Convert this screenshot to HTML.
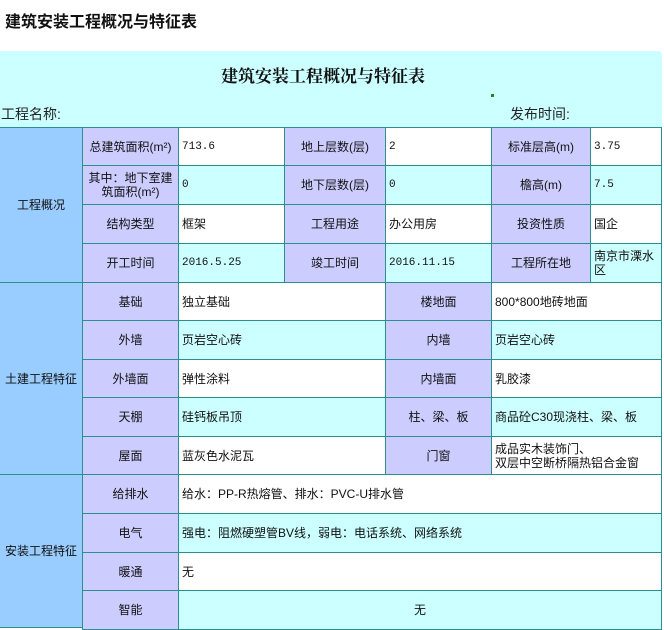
<!DOCTYPE html>
<html><head><meta charset="utf-8"><style>
body{margin:0;width:664px;height:628px;background:#fff;position:relative;overflow:hidden;font-family:"Liberation Sans","Noto Sans CJK SC",sans-serif;font-size:12px;color:#111}
.c{position:absolute;box-sizing:border-box;border:1px solid #2b8f8f;display:flex;align-items:center;justify-content:center;text-align:center;line-height:14px;margin:-1px 0 0 -1px}
.v{justify-content:flex-start;text-align:left;padding-left:3px}
.L{background:#ccccff}.B{background:#99ccff}.W{background:#fff}.C{background:#ccffff}
.m{font-family:"Liberation Mono","Noto Sans CJK SC",monospace;font-size:11px}
</style></head><body>
<div style="position:absolute;left:5px;top:8px;font-size:16px;font-weight:bold">建筑安装工程概况与特征表</div>
<div style="position:absolute;left:0;top:51px;width:662px;height:78px;background:#ccffff;border-top-right-radius:4px"></div>
<div style="position:absolute;left:0;top:62px;width:646px;text-align:center;font-size:17px;font-weight:bold;font-family:'Liberation Serif','Noto Serif CJK SC',serif">建筑安装工程概况与特征表</div>
<div style="position:absolute;left:491px;top:94px;width:3px;height:3px;background:#1a8a1a"></div>
<div style="position:absolute;left:1px;top:104px;font-size:14px;color:#222">工程名称:</div>
<div style="position:absolute;left:510px;top:104px;font-size:14px;color:#222">发布时间:</div>

<div class="c B" style="left:0;top:128px;width:84px;height:156px">工程概况</div>
<div class="c B" style="left:0;top:283px;width:84px;height:193px">土建工程特征</div>
<div class="c B" style="left:0;top:475px;width:84px;height:154px">安装工程特征</div>

<!-- row1 -->
<div class="c L" style="left:83px;top:128px;width:97px;height:39px">总建筑面积(m²)</div>
<div class="c W v m" style="left:179px;top:128px;width:107px;height:39px">713.6</div>
<div class="c L" style="left:285px;top:128px;width:102px;height:39px">地上层数(层)</div>
<div class="c W v m" style="left:386px;top:128px;width:107px;height:39px">2</div>
<div class="c L" style="left:492px;top:128px;width:100px;height:39px">标准层高(m)</div>
<div class="c W v m" style="left:591px;top:128px;width:72px;height:39px">3.75</div>
<!-- row2 -->
<div class="c L" style="left:83px;top:166px;width:97px;height:40px">其中：地下室建筑面积(m²)</div>
<div class="c C v m" style="left:179px;top:166px;width:107px;height:40px">0</div>
<div class="c L" style="left:285px;top:166px;width:102px;height:40px">地下层数(层)</div>
<div class="c C v m" style="left:386px;top:166px;width:107px;height:40px">0</div>
<div class="c L" style="left:492px;top:166px;width:100px;height:40px">檐高(m)</div>
<div class="c C v m" style="left:591px;top:166px;width:72px;height:40px">7.5</div>
<!-- row3 -->
<div class="c L" style="left:83px;top:205px;width:97px;height:40px">结构类型</div>
<div class="c W v" style="left:179px;top:205px;width:107px;height:40px">框架</div>
<div class="c L" style="left:285px;top:205px;width:102px;height:40px">工程用途</div>
<div class="c W v" style="left:386px;top:205px;width:107px;height:40px">办公用房</div>
<div class="c L" style="left:492px;top:205px;width:100px;height:40px">投资性质</div>
<div class="c W v" style="left:591px;top:205px;width:72px;height:40px">国企</div>
<!-- row4 -->
<div class="c L" style="left:83px;top:244px;width:97px;height:40px">开工时间</div>
<div class="c C v m" style="left:179px;top:244px;width:107px;height:40px">2016.5.25</div>
<div class="c L" style="left:285px;top:244px;width:102px;height:40px">竣工时间</div>
<div class="c C v m" style="left:386px;top:244px;width:107px;height:40px">2016.11.15</div>
<div class="c L" style="left:492px;top:244px;width:100px;height:40px">工程所在地</div>
<div class="c C v" style="left:591px;top:244px;width:72px;height:40px">南京市溧水区</div>

<!-- civil -->
<div class="c L" style="left:83px;top:283px;width:97px;height:39px">基础</div>
<div class="c W v" style="left:179px;top:283px;width:208px;height:39px">独立基础</div>
<div class="c L" style="left:386px;top:283px;width:107px;height:39px">楼地面</div>
<div class="c W v" style="left:492px;top:283px;width:171px;height:39px">800*800地砖地面</div>

<div class="c L" style="left:83px;top:321px;width:97px;height:40px">外墙</div>
<div class="c C v" style="left:179px;top:321px;width:208px;height:40px">页岩空心砖</div>
<div class="c L" style="left:386px;top:321px;width:107px;height:40px">内墙</div>
<div class="c C v" style="left:492px;top:321px;width:171px;height:40px">页岩空心砖</div>

<div class="c L" style="left:83px;top:360px;width:97px;height:39px">外墙面</div>
<div class="c W v" style="left:179px;top:360px;width:208px;height:39px">弹性涂料</div>
<div class="c L" style="left:386px;top:360px;width:107px;height:39px">内墙面</div>
<div class="c W v" style="left:492px;top:360px;width:171px;height:39px">乳胶漆</div>

<div class="c L" style="left:83px;top:398px;width:97px;height:40px">天棚</div>
<div class="c C v" style="left:179px;top:398px;width:208px;height:40px">硅钙板吊顶</div>
<div class="c L" style="left:386px;top:398px;width:107px;height:40px">柱、梁、板</div>
<div class="c C v" style="left:492px;top:398px;width:171px;height:40px">商品砼C30现浇柱、梁、板</div>

<div class="c L" style="left:83px;top:437px;width:97px;height:39px">屋面</div>
<div class="c W v" style="left:179px;top:437px;width:208px;height:39px">蓝灰色水泥瓦</div>
<div class="c L" style="left:386px;top:437px;width:107px;height:39px">门窗</div>
<div class="c W v" style="left:492px;top:437px;width:171px;height:39px">成品实木装饰门、<br>双层中空断桥隔热铝合金窗</div>

<!-- install -->
<div class="c L" style="left:83px;top:475px;width:97px;height:40px">给排水</div>
<div class="c W v" style="left:179px;top:475px;width:484px;height:40px">给水：PP-R热熔管、排水：PVC-U排水管</div>
<div class="c L" style="left:83px;top:514px;width:97px;height:40px">电气</div>
<div class="c C v" style="left:179px;top:514px;width:484px;height:40px">强电：阻燃硬塑管BV线，弱电：电话系统、网络系统</div>
<div class="c L" style="left:83px;top:553px;width:97px;height:39px">暖通</div>
<div class="c W v" style="left:179px;top:553px;width:484px;height:39px">无</div>
<div class="c L" style="left:83px;top:591px;width:97px;height:40px">智能</div>
<div class="c C" style="left:179px;top:591px;width:484px;height:40px">无</div>
</body></html>
